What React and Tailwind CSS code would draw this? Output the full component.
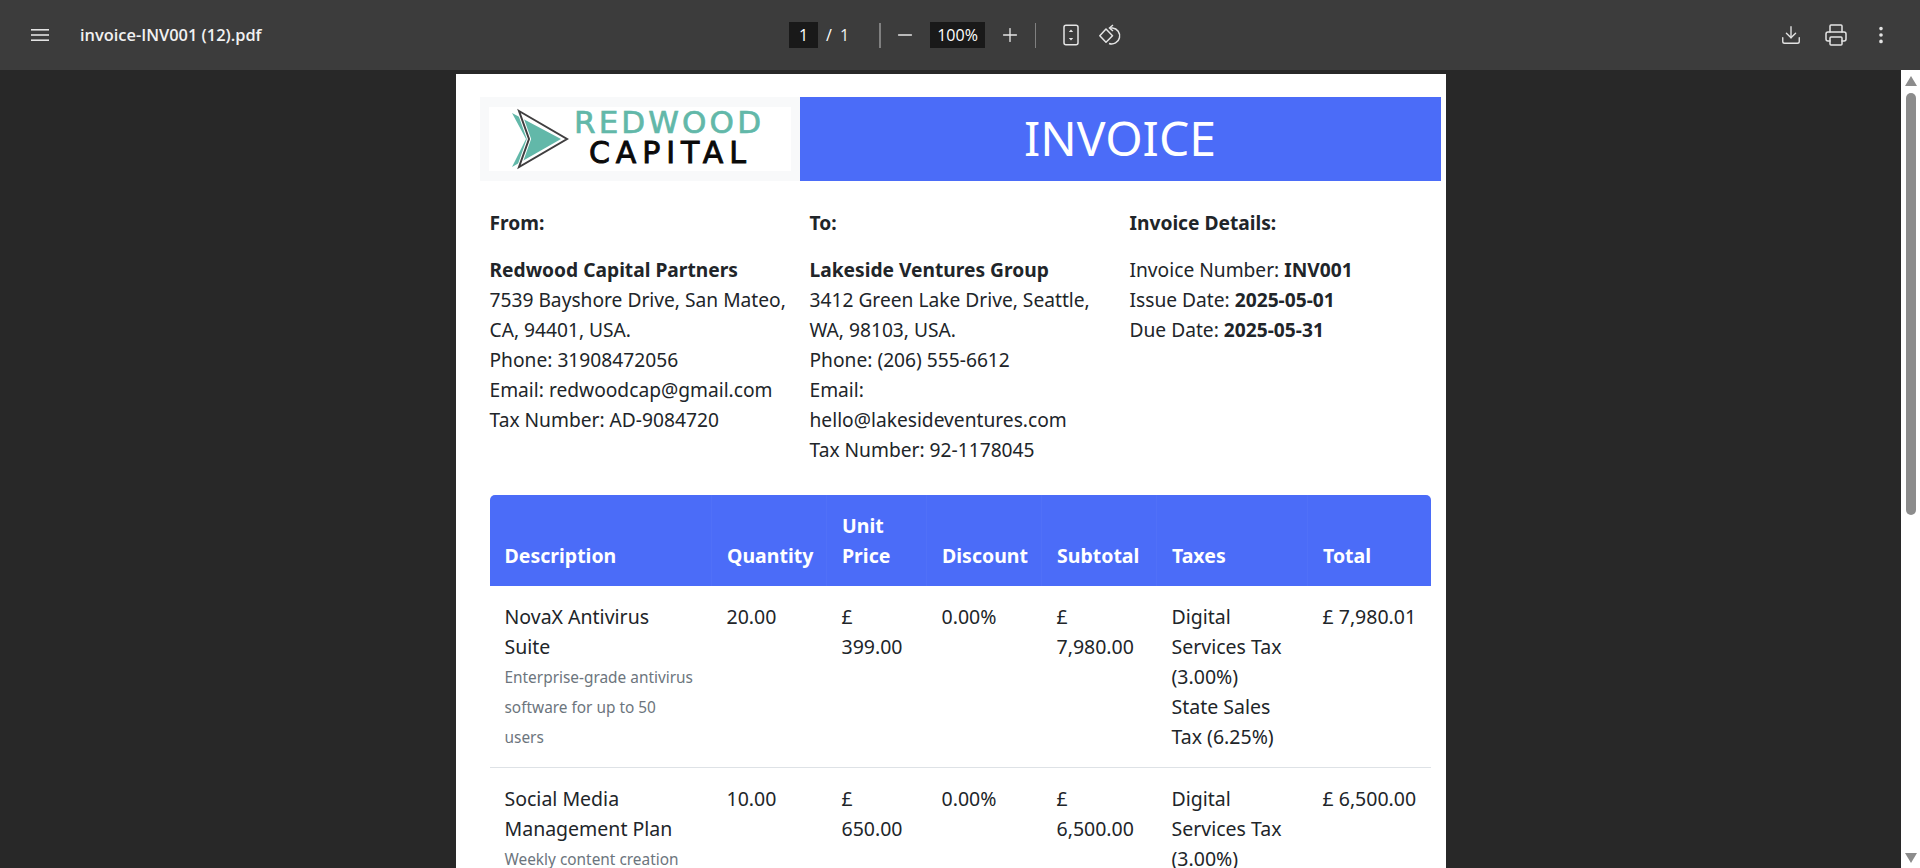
import { Minus, Plus, Download, Printer, EllipsisVertical } from "lucide-react";

const rows = [
  {
    name: ["NovaX Antivirus", "Suite"],
    info: ["Enterprise-grade antivirus", "software for up to 50", "users"],
    qty: "20.00",
    price: "399.00",
    subtotal: "7,980.00",
    taxes: ["Digital", "Services Tax", "(3.00%)", "State Sales", "Tax (6.25%)"],
    total: "£ 7,980.01",
  },
  {
    name: ["Social Media", "Management Plan"],
    info: ["Weekly content creation"],
    qty: "10.00",
    price: "650.00",
    subtotal: "6,500.00",
    taxes: ["Digital", "Services Tax", "(3.00%)"],
    total: "£ 6,500.00",
  },
];

function Lines({ items }) {
  return items.map((t) => <div key={t}>{t}</div>);
}

function Logo() {
  return (
    <svg viewBox="0 0 300 64" className="w-full h-full overflow-visible">
      <polygon points="22,6 71,32 22,60 36,32" fill="#62b8a9" />
      <polygon points="29,4 77,32 29,60 39,32" fill="none" stroke="#fff" strokeWidth="4" />
      <polygon points="29,4 77,32 29,60 39,32" fill="none" stroke="#403f40" strokeWidth="2" />
      <text x="84" y="26" textLength="187" lengthAdjust="spacing" fontFamily="'DejaVu Sans', sans-serif" fontSize="31" stroke="#62b8a9" strokeWidth="0.7" fill="#62b8a9">REDWOOD</text>
      <text x="99" y="56" textLength="157" lengthAdjust="spacing" fontFamily="'DejaVu Sans', sans-serif" fontSize="30" stroke="#0a0a0a" strokeWidth="0.9" fill="#0a0a0a">CAPITAL</text>
    </svg>
  );
}

function Toolbar() {
  return (
    <div className="h-[70px] shrink-0 bg-[#3c3c3c] flex items-center text-white font-['Open_Sans',sans-serif] relative z-10">
      <div className="w-[789px] shrink-0 flex items-center">
        <svg viewBox="0 0 18 12" className="ml-[31px] w-[18px] h-[12px]" fill="#e3e3e3">
          <rect y="0" width="18" height="1.6" />
          <rect y="5.2" width="18" height="1.6" />
          <rect y="10.4" width="18" height="1.6" />
        </svg>
        <span className="ml-[31px] text-[16.4px] font-semibold text-[#f1f1f1]">invoice-INV001 (12).pdf</span>
      </div>
      <div className="w-[29px] h-[26px] bg-[#191919] flex items-center justify-center text-[16px]">1</div>
      <span className="ml-[8px] text-[16px]">/</span>
      <span className="ml-[8px] text-[16px] text-[#f1f1f1]">1</span>
      <div className="ml-[30px] w-[2px] h-[25px] bg-[#808080]" />
      <Minus className="ml-[13px] w-[22px] h-[22px] text-[#e3e3e3]" strokeWidth={1.5} />
      <div className="ml-[14px] w-[55px] h-[26px] bg-[#191919] flex items-center justify-center text-[16px]">100%</div>
      <Plus className="ml-[14px] w-[22px] h-[22px] text-[#e3e3e3]" strokeWidth={1.5} />
      <div className="ml-[14px] w-px h-[25px] bg-[#808080]" />
      <svg viewBox="0 0 16 22" className="ml-[27px] w-[16px] h-[22px]" fill="none" stroke="#e3e3e3" strokeWidth="1.5">
        <rect x="1" y="1.2" width="14" height="19.6" rx="2" />
        <path d="M8 5.5l2.2 2.5H5.8zM8 16.5l2.2-2.5H5.8z" fill="#e3e3e3" stroke="none" />
      </svg>
      <svg viewBox="0 0 24 22" className="ml-[20px] w-[24px] h-[22px]" fill="none" stroke="#e3e3e3" strokeWidth="1.5">
        <path d="M14 1l-3.5 3L14 7" />
        <path d="M11 4h2.5a8 8 0 1 1-3.5 15.5" />
        <path d="M7 5l6.5 6.7L7 18.2 .8 11.7z" strokeLinejoin="round" />
      </svg>
      <div className="ml-auto flex items-center">
        <Download className="w-[22px] h-[22px] text-[#e3e3e3]" strokeWidth={1.5} />
        <Printer className="ml-[22px] w-6 h-6 text-[#e3e3e3]" strokeWidth={1.5} />
        <EllipsisVertical className="ml-[22px] mr-[28px] w-[22px] h-[22px] text-[#e3e3e3]" strokeWidth={2} />
      </div>
    </div>
  );
}

function Scrollbar() {
  return (
    <div className="w-[19px] shrink-0 bg-white flex flex-col items-center">
      <div className="mt-[6px] w-0 h-0 border-x-[6px] border-x-transparent border-b-[10px] border-b-[#8c8c8c]" />
      <div className="mt-[7px] w-[10px] h-[422px] rounded-[5px] bg-[#8c8c8c]" />
      <div className="mt-auto mb-[5px] w-0 h-0 border-x-[6px] border-x-transparent border-t-[10px] border-t-[#8c8c8c]" />
    </div>
  );
}

function Invoice() {
  const th = "px-[15px] pt-[16px] pb-[15px] align-bottom text-left font-bold border-l border-white/[0.03] first:border-l-0";
  const td = "px-[15px] pt-[16px] pb-[14px] align-top";
  return (
    <div className="w-[990px] mx-auto mt-[4px] bg-white text-[#212529] text-[19.2px] leading-[30px] font-['Noto_Sans',sans-serif]">
      <div className="pt-[23px] pl-[24px] pr-[5px] flex h-[107px]">
        <div className="w-[320px] bg-[#f8f9fa] px-[9px] pt-[10px] pb-[10px]">
          <div className="bg-white h-full"><Logo /></div>
        </div>
        <div className="flex-1 bg-[#4b6cf8] text-white text-[48px] font-normal flex items-center justify-center pb-[2px]">INVOICE</div>
      </div>

      <div className="mt-[27px] pl-[34px] pr-[25px] grid grid-cols-[320px_320px_1fr]">
        <div>
          <div className="font-bold mb-[17px]">From:</div>
          <div className="font-bold">Redwood Capital Partners</div>
          <div>7539 Bayshore Drive, San Mateo,</div>
          <div>CA, 94401, USA.</div>
          <div>Phone: 31908472056</div>
          <div>Email: redwoodcap@gmail.com</div>
          <div>Tax Number: AD-9084720</div>
        </div>
        <div>
          <div className="font-bold mb-[17px]">To:</div>
          <div className="font-bold">Lakeside Ventures Group</div>
          <div>3412 Green Lake Drive, Seattle,</div>
          <div>WA, 98103, USA.</div>
          <div>Phone: (206) 555-6612</div>
          <div>Email:</div>
          <div>hello@lakesideventures.com</div>
          <div>Tax Number: 92-1178045</div>
        </div>
        <div>
          <div className="font-bold mb-[17px]">Invoice Details:</div>
          <div>Invoice Number: <b>INV001</b></div>
          <div>Issue Date: <b>2025-05-01</b></div>
          <div>Due Date: <b>2025-05-31</b></div>
        </div>
      </div>

      <div className="mt-[30px] pl-[34px]">
        <table className="w-[941px] table-fixed border-collapse whitespace-nowrap text-[19.5px]">
          <colgroup>
            <col className="w-[222px]" />
            <col className="w-[115px]" />
            <col className="w-[100px]" />
            <col className="w-[115px]" />
            <col className="w-[115px]" />
            <col className="w-[151px]" />
            <col className="w-[123px]" />
          </colgroup>
          <thead>
            <tr className="bg-[#4b6cf8] text-white">
              <th className={`${th} rounded-tl-[5px]`}>Description</th>
              <th className={th}>Quantity</th>
              <th className={th}>Unit<br />Price</th>
              <th className={th}>Discount</th>
              <th className={th}>Subtotal</th>
              <th className={th}>Taxes</th>
              <th className={`${th} rounded-tr-[5px]`}>Total</th>
            </tr>
          </thead>
          <tbody>
            {rows.map((r) => (
              <tr key={r.qty} className="border-b border-[#dee2e6]">
                <td className={td}>
                  <Lines items={r.name} />
                  <div className="mt-[1px] text-[15.4px] text-[#6c757d]"><Lines items={r.info} /></div>
                </td>
                <td className={td}>{r.qty}</td>
                <td className={td}>£<br />{r.price}</td>
                <td className={td}>0.00%</td>
                <td className={td}>£<br />{r.subtotal}</td>
                <td className={td}><Lines items={r.taxes} /></td>
                <td className={td}>{r.total}</td>
              </tr>
            ))}
          </tbody>
        </table>
      </div>
    </div>
  );
}

export default function App() {
  return (
    <div className="h-screen flex flex-col overflow-hidden bg-[#282828]">
      <Toolbar />
      <div className="flex-1 min-h-0 flex">
        <div className="flex-1 min-w-0 overflow-hidden">
          <Invoice />
        </div>
        <Scrollbar />
      </div>
    </div>
  );
}
